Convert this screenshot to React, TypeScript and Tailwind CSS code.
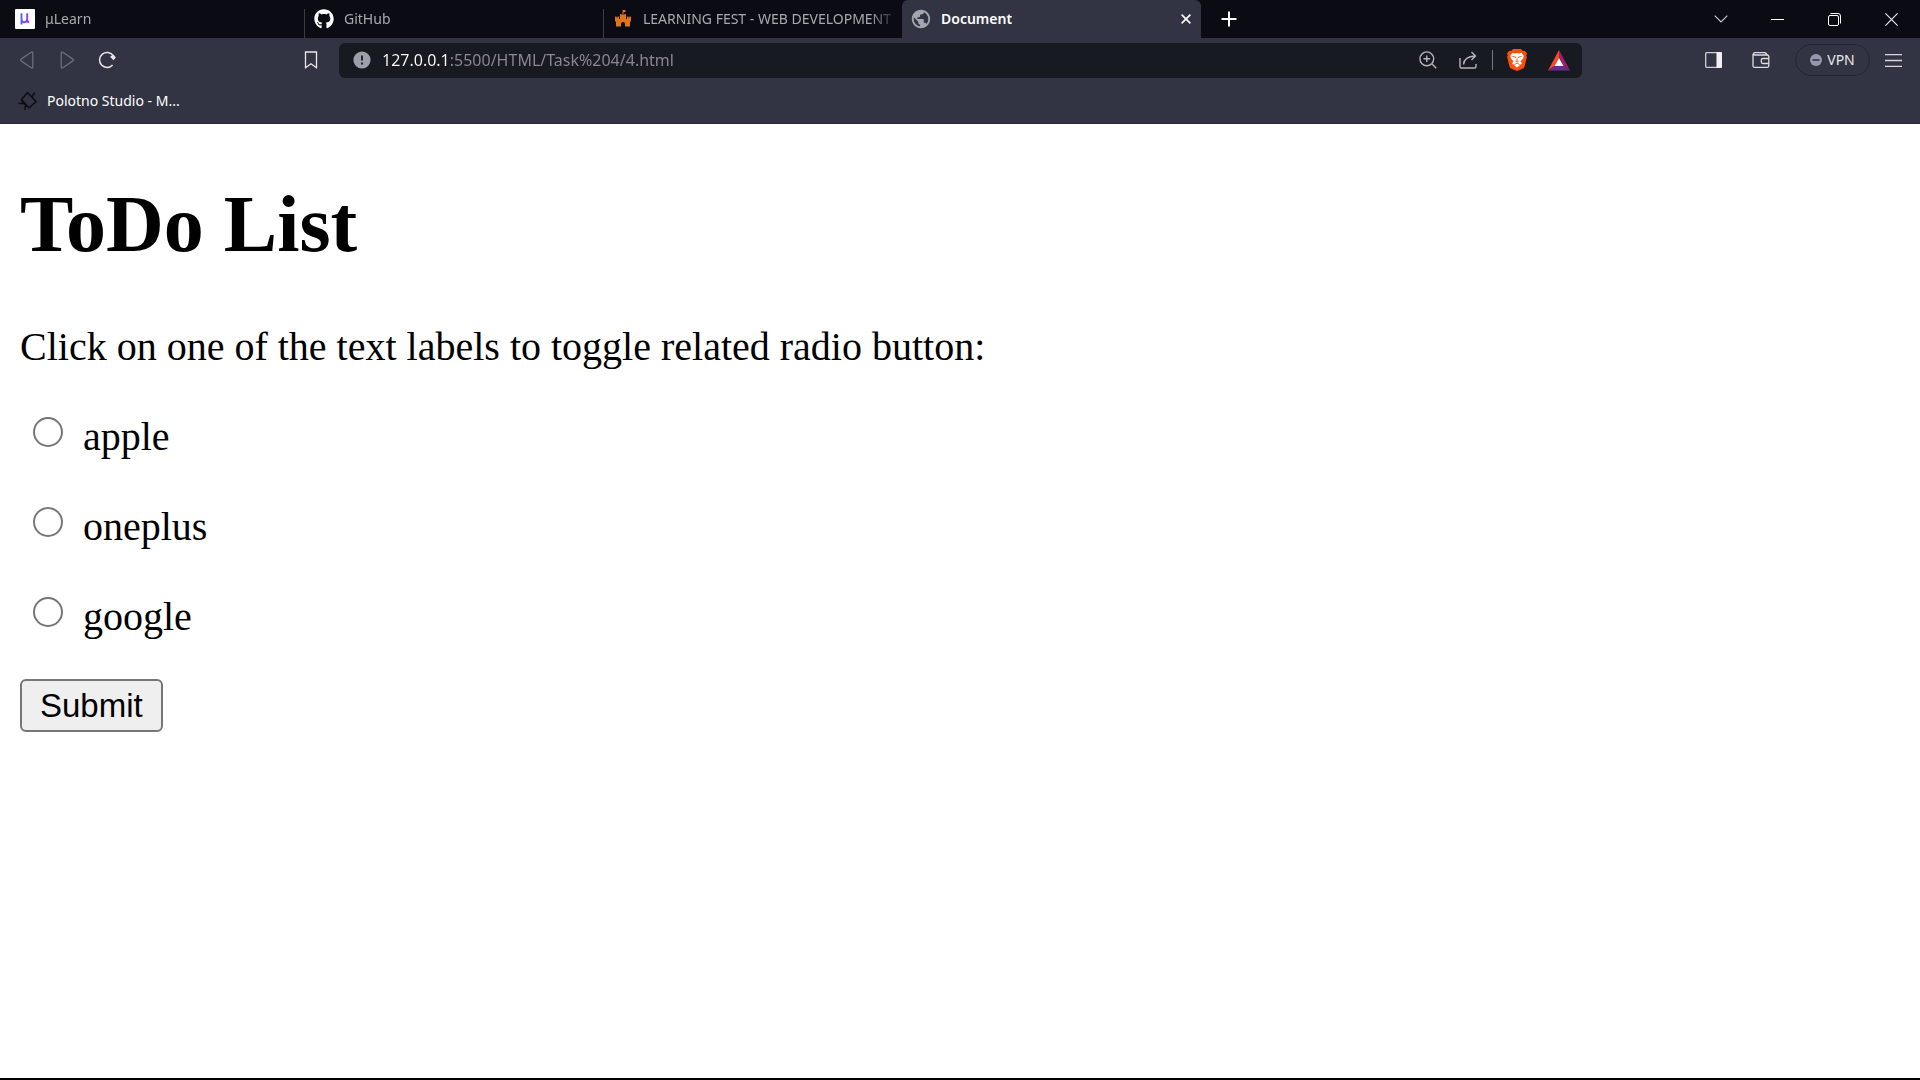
import React from "react";
import { FaGithub } from "react-icons/fa";
import { MdPublic } from "react-icons/md";

function MuLogo() {
  return (
    <svg viewBox="0 0 20 20" className="size-5 shrink-0" aria-hidden="true">
      <defs>
        <linearGradient id="mu" gradientUnits="userSpaceOnUse" x1="5" x2="15" y1="0" y2="0">
          <stop offset="0" stopColor="#3f6df6" />
          <stop offset="1" stopColor="#b32af2" />
        </linearGradient>
      </defs>
      <rect width="20" height="20" rx="1" fill="#fff" />
      <path
        d="M6.500 4.200v11.200M6.500 10c0 2.200 1 3.200 2.700 3.200s3-1 3-3.200V4.200M12.200 10.500c0 2 .6 2.700 2 2.700"
        fill="none"
        stroke="url(#mu)"
        strokeWidth="1.900"
      />
    </svg>
  );
}

function CastleLogo() {
  return (
    <svg viewBox="0 0 20 20" className="size-5 shrink-0" fill="#de7518" aria-hidden="true">
      <path d="M9.500 1h3v2h-2v2.500h-1z" />
      <path d="M7 5h1.500v1h1V5h1v1h1V5H13v5H7z" />
      <path d="M2 7.500h1.500v1h1v-1H6V10h8V7.500h1.500v1h1v-1H18V12l-1 1v4.500h-5V15a2 2 0 0 0-4 0v2.500H3V13l-1-1z" />
    </svg>
  );
}

type TabInfo = { title: string; icon: React.ReactNode; active?: boolean; divider?: boolean };

const tabs: TabInfo[] = [
  { title: "μLearn", icon: <MuLogo /> },
  { title: "GitHub", icon: <FaGithub className="size-5 shrink-0 text-white" />, divider: true },
  { title: "LEARNING FEST - WEB DEVELOPMENT", icon: <CastleLogo />, divider: true },
  { title: "Document", icon: <MdPublic className="size-[22px] -mx-px shrink-0 text-[#a4a7b0]" />, active: true },
];

function Tab({ title, icon, active, divider }: TabInfo) {
  if (active) {
    return (
      <div className="flex h-full w-[299px] min-w-0 items-center rounded-t-md bg-[#323443] pr-[3px] text-white">
        <button type="button" className="flex h-full min-w-0 flex-1 items-center gap-2.5 pl-[9px] text-left font-semibold">
          {icon}
          <span className="truncate">{title}</span>
        </button>
        <button type="button" aria-label="Close tab" className="grid size-6 place-items-center">
          <svg viewBox="0 0 10 10" className="size-2.5" stroke="currentColor" strokeWidth="1.600" aria-hidden="true">
            <path d="M.6.6l8.800 8.800M9.400.6L.6 9.400" />
          </svg>
        </button>
      </div>
    );
  }
  return (
    <div className="flex h-full w-[299px] min-w-0 items-end text-[#a9a9ad]">
      <span className={divider ? "h-[29px] w-px bg-[#3c3c3e]" : "w-px"} />
      <button type="button" className="flex h-full min-w-0 flex-1 items-center gap-2.5 pr-1 pl-[9px] text-left">
        {icon}
        <span className="min-w-0 flex-1 overflow-hidden whitespace-nowrap [mask-image:linear-gradient(to_left,transparent,black_28px)]">
          {title}
        </span>
      </button>
    </div>
  );
}

function TabStrip() {
  const control = "grid h-full w-[57px] place-items-center";
  return (
    <header className="flex h-[38px] bg-[#0b0b14] pl-[5px] text-sm">
      <div className="flex min-w-0">
        {tabs.map((t) => (
          <Tab key={t.title} {...t} />
        ))}
      </div>
      <button type="button" aria-label="New tab" className="grid h-full w-14 shrink-0 place-items-center">
        <svg viewBox="0 0 16 16" className="size-4" stroke="#fff" strokeWidth="2" aria-hidden="true">
          <path d="M8 .5v15M.5 8h15" />
        </svg>
      </button>
      <div className="ml-auto flex shrink-0 text-white">
        <button type="button" aria-label="Search tabs" className={control}>
          <svg viewBox="0 0 14 8" className="h-2 w-3.5" fill="none" stroke="#c9c9cc" strokeWidth="1.200" aria-hidden="true">
            <path d="M.7.7L7 7 13.300.7" />
          </svg>
        </button>
        <button type="button" aria-label="Minimize" className={control}>
          <svg viewBox="0 0 13 3" className="h-[3px] w-[13px]" aria-hidden="true">
            <path d="M0 1h13v1H0z" fill="#fff" />
          </svg>
        </button>
        <button type="button" aria-label="Restore" className={control}>
          <svg viewBox="0 0 13 13" className="size-[13px]" fill="none" stroke="#fff" aria-hidden="true">
            <rect x=".5" y="2.500" width="10" height="10" rx="1.500" />
            <path d="M2.500.5H10a2.500 2.500 0 0 1 2.500 2.500v7.500" />
          </svg>
        </button>
        <button type="button" aria-label="Close" className={control}>
          <svg viewBox="0 0 13 13" className="size-[13px]" stroke="#e6e6e8" strokeWidth="1.200" aria-hidden="true">
            <path d="M.4.4l12.200 12.200M12.600.4L.4 12.600" />
          </svg>
        </button>
      </div>
    </header>
  );
}

function BraveIcon() {
  return (
    <svg viewBox="0 0 20 22" className="h-[22px] w-5" aria-hidden="true">
      <path d="M6 0h8l1.800 2 2-.2L20 4.500l-.7 2 .6 1.600-2.300 9.200a4 4 0 0 1-1.500 2.100L10 22l-6.100-2.600a4 4 0 0 1-1.500-2.100L.1 8.100l.6-1.600-.7-2 2.200-2.700 2 .2z" fill="#fb4f0b" />
      <path d="M5.500 3.800l2.500.6L10 4l2 .4 2.500-.6 2.200 3-.5 2.400-2.700 3.200 1.300 1.500-.7 1.700-1.900-.4.500 1.300L10 18.500l-2.700-2 .5-1.300-1.900.4-.7-1.700 1.300-1.500-2.700-3.200-.5-2.400z" fill="#fff" />
      <path d="M5.500 7.500l3 .5.300 1.200M14.500 7.500l-3 .5-.3 1.200M10 9.500v2.800M8.300 12l1.700 1 1.700-1M7.800 15.300l2.200-1.300 2.200 1.300" fill="none" stroke="#fb4f0b" strokeWidth=".9" />
    </svg>
  );
}

function BatIcon() {
  return (
    <svg viewBox="0 0 24 21" className="h-[21px] w-6" aria-hidden="true">
      <path d="M12 0v8L7.500 16 1 20.500z" fill="#ff4724" />
      <path d="M12 0l11 20.500L16.500 16 12 8z" fill="#9e1f63" />
      <path d="M1 20.500L7.500 16h9l6.500 4.500z" fill="#662d91" />
      <path d="M12 8l4.500 8h-9z" fill="#fff" />
    </svg>
  );
}

function Toolbar() {
  const tool = "grid h-9 w-10 shrink-0 place-items-center";
  return (
    <div className="flex h-11 items-center text-[#e8e8ea]">
      <div className="flex w-[339px] shrink-0 pr-2 pl-[7px]">
        <button type="button" aria-label="Back" className={tool}>
          <svg viewBox="0 0 16 18" className="h-[18px] w-4" fill="none" stroke="#6b6d7b" strokeWidth="1.300" aria-hidden="true">
            <path d="M12.200 1.200a1 1 0 0 1 1.600.8v14a1 1 0 0 1-1.600.8L2.100 9.900a1.200 1.200 0 0 1 0-1.800z" />
          </svg>
        </button>
        <button type="button" aria-label="Forward" className={tool}>
          <svg viewBox="0 0 16 18" className="h-[18px] w-4" fill="none" stroke="#6b6d7b" strokeWidth="1.300" aria-hidden="true">
            <path d="M3.800 1.200a1 1 0 0 0-1.600.8v14a1 1 0 0 0 1.600.8l10.100-6.900a1.200 1.200 0 0 0 0-1.800z" />
          </svg>
        </button>
        <button type="button" aria-label="Reload" className={tool}>
          <svg viewBox="0 0 18 18" className="size-[18px]" aria-hidden="true">
            <path d="M15.300 4.800A7.500 7.500 0 1 0 14.600 14" fill="none" stroke="currentColor" strokeWidth="1.500" />
            <path d="M12 5.800l3.500-2.300 2.300 3-2.300 2.700z" fill="currentColor" />
          </svg>
        </button>
        <button type="button" aria-label="Bookmark this page" className="ml-auto grid h-9 w-10 shrink-0 place-items-center">
          <svg viewBox="0 0 14 18" className="h-[18px] w-3.5" fill="none" stroke="currentColor" strokeWidth="1.300" aria-hidden="true">
            <path d="M1.500 1h11v15.700L7 12.800l-5.500 3.900z" />
          </svg>
        </button>
      </div>

      <div className="flex h-[35px] min-w-0 flex-1 items-center rounded-md bg-[#181a21] pr-px pl-3.5">
        <svg viewBox="0 0 18 18" className="size-[18px] shrink-0" aria-hidden="true">
          <circle cx="9" cy="9" r="8.600" fill="#9d9faa" />
          <path d="M9 4.500v5M9 11.500v2" stroke="#181a21" strokeWidth="1.800" />
        </svg>
        <input
          type="text"
          aria-label="Address"
          defaultValue="127.0.0.1:5500/HTML/Task%204/4.html"
          className="ml-[11px] h-full min-w-0 flex-1 bg-[linear-gradient(90deg,#ffffff_67px,#8a8b90_67px)] bg-clip-text text-base text-transparent caret-white outline-none"
        />
        <button type="button" aria-label="Zoom" className={tool}>
          <svg viewBox="0 0 18 18" className="size-[18px]" fill="none" stroke="#b4b5b8" strokeWidth="1.400" aria-hidden="true">
            <circle cx="7.800" cy="7.800" r="6.900" />
            <path d="M12.800 12.800l4.500 4.500M7.800 4.500v6.600M4.500 7.800h6.600" />
          </svg>
        </button>
        <button type="button" aria-label="Share" className={tool}>
          <svg viewBox="0 0 18 18" className="size-[18px]" fill="none" stroke="#b4b5b8" strokeWidth="1.400" aria-hidden="true">
            <path d="M1 7v8.500A1.500 1.500 0 0 0 2.500 17h13a1.500 1.500 0 0 0 1.500-1.500V13M4.500 13.500C4.800 8.500 8 5.500 16 5M12.500 1l4 4-4 4" />
          </svg>
        </button>
        <span className="mx-1 h-5 w-px bg-[#77787d]" />
        <button type="button" aria-label="Brave Shields" className={tool}>
          <BraveIcon />
        </button>
        <button type="button" aria-label="Brave Rewards" className="grid h-9 w-11 shrink-0 place-items-center">
          <BatIcon />
        </button>
      </div>

      <div className="flex w-[338px] shrink-0 items-center justify-end pr-3.5">
        <button type="button" aria-label="Side panel" className="grid h-9 w-12 place-items-center">
          <svg viewBox="0 0 17 16" className="h-4 w-[17px]" aria-hidden="true">
            <rect x=".7" y=".7" width="15.600" height="14.600" rx="1" fill="none" stroke="#cfd0d4" strokeWidth="1.300" />
            <path d="M11.500 0H16a1 1 0 0 1 1 1v14a1 1 0 0 1-1 1h-4.500z" fill="#f1f1f3" />
          </svg>
        </button>
        <button type="button" aria-label="Wallet" className="grid h-9 w-12 place-items-center">
          <svg viewBox="0 0 18 16" className="h-4 w-[18px]" fill="none" stroke="#dcdde0" strokeWidth="1.300" aria-hidden="true">
            <path d="M16.800 6V4.500A1.500 1.500 0 0 0 15.300 3H2.500A1.200 1.200 0 0 1 2.500.7h10.700L15.500 3M1 1.800v12a1.500 1.500 0 0 0 1.500 1.500h12.800a1.500 1.500 0 0 0 1.500-1.500V6.500h-6a1.500 1.500 0 0 0-1.500 1.500v2a1.500 1.500 0 0 0 1.500 1.500h6" />
          </svg>
        </button>
        <button type="button" className="mx-2.5 flex h-8 w-[75px] items-center justify-center gap-[5px] rounded-full border border-[#242634] text-sm">
          <svg viewBox="0 0 12 12" className="size-3" aria-hidden="true">
            <circle cx="6" cy="6" r="6" fill="#9698ae" />
            <path d="M2.500 6h7" stroke="#323443" strokeWidth="1.600" />
          </svg>
          VPN
        </button>
        <button type="button" aria-label="Menu" className="grid h-9 w-[26px] place-items-center">
          <svg viewBox="0 0 17 13" className="h-[13px] w-[17px]" fill="none" stroke="#d6d6da" strokeWidth="1.300" aria-hidden="true">
            <path d="M0 .7h17M0 6.500h17M0 12.300h17" />
          </svg>
        </button>
      </div>
    </div>
  );
}

function BookmarksBar() {
  return (
    <nav aria-label="Bookmarks" className="flex h-[42px] items-center border-b border-[#2a2c3a] pb-1 pl-[18px]">
      <a href="#polotno" className="flex items-center gap-[9px] text-sm text-white">
        <svg viewBox="0 0 20 20" className="size-5" fill="none" stroke="#0c0d12" strokeWidth="1.500" aria-hidden="true">
          <path d="M9.500 1.500l8.500 9-7 6.500-7.500-8.500zM14 5.500l3-4M3.500 8.500L5 12M6 12.500H.5M7.500 14l-.7 5M5 11.500l4 4" />
        </svg>
        Polotno Studio - M...
      </a>
    </nav>
  );
}

const brands = ["apple", "oneplus", "google"];

function Page() {
  return (
    <main className="flex-1 border-b-2 border-black bg-white px-5 pt-[54px] font-['Liberation_Serif',serif] text-[40px] leading-[46px] text-black">
      <h1 className="text-[80px] leading-[92px] font-bold">ToDo List</h1>
      <p className="mt-[54px]">Click on one of the text labels to toggle related radio button:</p>
      <form className="mt-11" onSubmit={(e) => e.preventDefault()}>
        <div className="flex flex-col gap-11">
          {brands.map((b) => (
            <div key={b} className="flex items-start gap-5 pl-[13px]">
              <input
                id={b}
                type="radio"
                name="brand"
                value={b}
                className="mt-[3px] size-[30px] shrink-0 appearance-none rounded-full border-2 border-[#767676] bg-white checked:border-8 checked:border-[#0075ff]"
              />
              <label htmlFor={b}>{b}</label>
            </div>
          ))}
        </div>
        <button
          type="submit"
          className="mt-[39px] block h-[53px] rounded-md border-2 border-[#767676] bg-[#efefef] px-[18px] font-['Liberation_Sans',sans-serif] text-[33px] leading-[48px]"
        >
          Submit
        </button>
      </form>
    </main>
  );
}

export default function App() {
  return (
    <div className="flex min-h-screen flex-col font-['Noto_Sans','Open_Sans',sans-serif]">
      <TabStrip />
      <div className="bg-[#323443]">
        <Toolbar />
        <BookmarksBar />
      </div>
      <Page />
    </div>
  );
}
